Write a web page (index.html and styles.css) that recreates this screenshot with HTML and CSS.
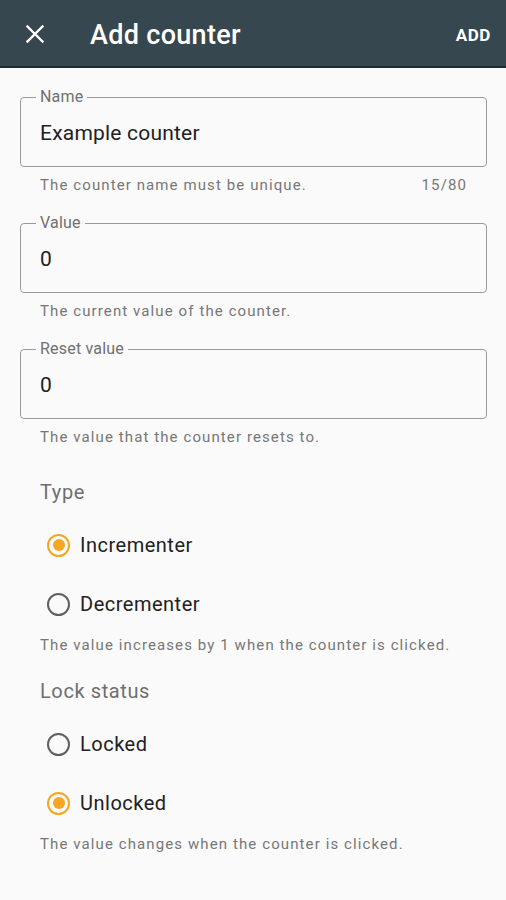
FILE: index.html
```html
<!DOCTYPE html>
<html lang="en">
<head>
<meta charset="utf-8">
<title>Add counter</title>
<link rel="stylesheet" href="styles.css">
</head>
<body>
<header class="appbar">
  <svg class="close" width="18" height="18" viewBox="0 0 18 18"><path d="M1.5 1.5 L16.5 16.5 M16.5 1.5 L1.5 16.5" stroke="#fff" stroke-width="2.4" stroke-linecap="square"/></svg>
  <h1 class="title">Add counter</h1>
  <span class="action">ADD</span>
</header>
<main class="form">
  <div class="field">
    <fieldset class="outline">
      <legend class="label">Name</legend>
      <div class="value">Example counter</div>
    </fieldset>
    <div class="helper"><span>The counter name must be unique.</span><span>15/80</span></div>
  </div>
  <div class="field">
    <fieldset class="outline">
      <legend class="label">Value</legend>
      <div class="value">0</div>
    </fieldset>
    <div class="helper"><span>The current value of the counter.</span></div>
  </div>
  <div class="field">
    <fieldset class="outline">
      <legend class="label">Reset value</legend>
      <div class="value">0</div>
    </fieldset>
    <div class="helper"><span>The value that the counter resets to.</span></div>
  </div>

  <section class="group group-first">
    <div class="group-title">Type</div>
    <div class="radio checked"><span class="ring"></span><span class="radio-label">Incrementer</span></div>
    <div class="radio"><span class="ring"></span><span class="radio-label">Decrementer</span></div>
    <div class="helper"><span>The value increases by 1 when the counter is clicked.</span></div>
  </section>

  <section class="group">
    <div class="group-title">Lock status</div>
    <div class="radio"><span class="ring"></span><span class="radio-label">Locked</span></div>
    <div class="radio checked"><span class="ring"></span><span class="radio-label">Unlocked</span></div>
    <div class="helper"><span>The value changes when the counter is clicked.</span></div>
  </section>
</main>
</body>
</html>
```

FILE: styles.css
```css
* { box-sizing: border-box; }
html, body { margin: 0; padding: 0; }
body {
  background: #fafafa;
  font-family: Roboto, "Noto Sans", sans-serif;
  color: #212121;
  width: 506px;
  height: 900px;
  overflow: hidden;
}
.appbar {
  height: 68px;
  background: #37474f;
  border-bottom: 2px solid #1e2b33;
  display: flex;
  align-items: center;
  padding: 4px 15px 0 26px;
  color: #fff;
}
.close { flex: none; margin-top: -2px; }
.title {
  margin: 0 0 0 46px;
  font-size: 27px;
  font-weight: 500;
  flex: 1;
  letter-spacing: 0.3px;
}
.action {
  font-size: 17px;
  font-weight: 700;
  letter-spacing: 0.6px;
}
.form {
  padding: 21px 19px 0 20px;
}
.field { margin-bottom: 20px; }
.outline {
  margin: 0;
  border: 1px solid #9a9a9a;
  border-radius: 4px;
  padding: 0 19px 0 19px;
  min-width: 0;
}
.label {
  margin-left: -4px;
  padding: 0 4px;
  font-size: 16px;
  line-height: 16px;
  color: #707070;
  letter-spacing: 0.2px;
}
.value {
  font-size: 21px;
  line-height: 24px;
  padding: 16px 0 21px;
  color: #212121;
  letter-spacing: 0.2px;
}
.helper {
  display: flex;
  justify-content: space-between;
  padding: 8px 20px 0 20px;
  font-size: 15px;
  line-height: 20px;
  color: #777;
  letter-spacing: 1.1px;
}
.group { padding: 0; margin-top: 24px; }
.group-first { margin-top: 33px; }
.group .helper { margin-top: 7px; padding-top: 0; }
.group-title {
  padding-left: 20px;
  font-size: 20px;
  line-height: 24px;
  color: #6f6f6f;
  margin-bottom: 17px;
  letter-spacing: 0.6px;
}
.radio {
  display: flex;
  align-items: center;
  height: 48px;
  padding-left: 27px;
  margin-bottom: 11px;
}
.radio + .helper { margin-top: -4px; }
.ring {
  width: 23px;
  height: 23px;
  border-radius: 50%;
  border: 2px solid #5f5f5f;
  position: relative;
  flex: none;
}
.checked .ring { border-color: #f5a623; }
.checked .ring::after {
  content: "";
  position: absolute;
  left: 3.5px;
  top: 3.5px;
  width: 12px;
  height: 12px;
  border-radius: 50%;
  background: #f5a623;
}
.radio-label {
  margin-left: 10px;
  font-size: 20px;
  color: #212121;
  letter-spacing: 0.5px;
}
```
